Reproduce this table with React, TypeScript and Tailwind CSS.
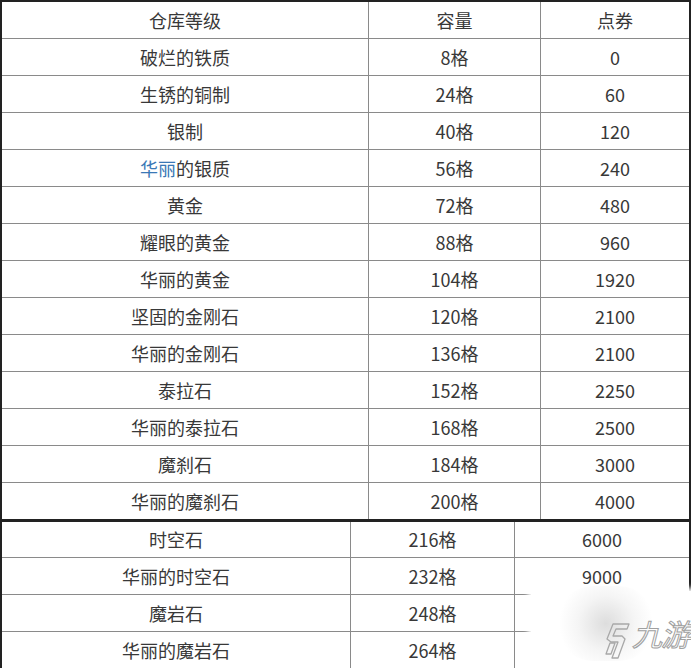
import React from 'react';

type Row = { name: string; cap: string; cost: string; blue?: string };

const upper: Row[] = [
  { name: '破烂的铁质', cap: '8格', cost: '0' },
  { name: '生锈的铜制', cap: '24格', cost: '60' },
  { name: '银制', cap: '40格', cost: '120' },
  { name: '的银质', cap: '56格', cost: '240', blue: '华丽' },
  { name: '黄金', cap: '72格', cost: '480' },
  { name: '耀眼的黄金', cap: '88格', cost: '960' },
  { name: '华丽的黄金', cap: '104格', cost: '1920' },
  { name: '坚固的金刚石', cap: '120格', cost: '2100' },
  { name: '华丽的金刚石', cap: '136格', cost: '2100' },
  { name: '泰拉石', cap: '152格', cost: '2250' },
  { name: '华丽的泰拉石', cap: '168格', cost: '2500' },
  { name: '魔刹石', cap: '184格', cost: '3000' },
  { name: '华丽的魔刹石', cap: '200格', cost: '4000' },
];

const lower: Row[] = [
  { name: '时空石', cap: '216格', cost: '6000' },
  { name: '华丽的时空石', cap: '232格', cost: '9000' },
  { name: '魔岩石', cap: '248格', cost: '' },
  { name: '华丽的魔岩石', cap: '264格', cost: '' },
];

const font = { fontFamily: '"Noto Sans CJK SC", "Noto Sans", sans-serif' };

// "九游" watermark in the bottom right corner
const Watermark = () => (
  <div className="absolute left-[531px] top-[591px] w-[170px] h-[90px] bg-white shadow-[0_0_5px_3px_white]">
    <div className="absolute left-[25px] top-[-5px] w-[100px] h-[75px] rounded-full bg-[radial-gradient(circle,_rgba(170,170,170,0.4)_0%,_rgba(200,200,200,0.18)_45%,_rgba(255,255,255,0)_75%)]" />
    <svg
      className="absolute left-[73px] top-[32px]"
      width="26"
      height="36"
      viewBox="0 0 26 36"
      fill="none"
      stroke="#a8a8a8"
      strokeWidth="1.3"
      strokeLinejoin="round"
    >
      <path d="M9 1 L25 1 L23 6 L12 6 L9 13 L18 13 L21 16 L14 35 L8 35 L14 19 L7 19 L3 16 Z" />
      <path d="M6 20 L11 20 L7 31 L2 31 Z" />
    </svg>
    <span
      className="absolute left-[101px] top-[24px] h-[36px] flex items-center text-[30px] leading-none italic text-transparent [-webkit-text-stroke:1px_#a0a0a0] tracking-[-1px] whitespace-nowrap"
      style={font}
    >
      九游
    </span>
  </div>
);

const Cell: React.FC<{ w: string; last?: boolean; children: React.ReactNode }> = ({ w, last, children }) => (
  <div className={`${w} flex items-center justify-center ${last ? '' : 'border-r border-[#8a8a8a]'}`}>{children}</div>
);

export default function App() {
  return (
    <div className="relative w-[691px] h-[668px] overflow-hidden bg-white text-[18px] text-[#383838]" style={font}>
      {/* upper table */}
      <div className="border-t-2 border-l-2 border-r-2 border-[#222]">
        <div className="flex h-[37px] border-b border-[#8a8a8a]">
          <Cell w="w-[367px]">仓库等级</Cell>
          <Cell w="w-[172px]">容量</Cell>
          <Cell w="w-[148px]" last>点券</Cell>
        </div>
        {upper.map((r, i) => (
          <div
            key={r.cap}
            className={`flex ${i === upper.length - 1 ? 'h-[39px] border-b-[3px] border-[#222]' : 'h-[37px] border-b border-[#8a8a8a]'}`}
          >
            <Cell w="w-[367px]">
              {r.blue && <span className="text-[#3a78b6]">{r.blue}</span>}
              {r.name}
            </Cell>
            <Cell w="w-[172px]">{r.cap}</Cell>
            <Cell w="w-[148px]" last>{r.cost}</Cell>
          </div>
        ))}
      </div>

      {/* lower table */}
      <div className="border-l-2 border-r-2 border-[#222]">
        {lower.map((r, i) => (
          <div key={r.cap} className={`flex ${i === 0 ? 'h-[36px]' : 'h-[37px]'} border-b border-[#8a8a8a]`}>
            <Cell w="w-[349px]">{r.name}</Cell>
            <Cell w="w-[164px]">{r.cap}</Cell>
            <Cell w="w-[174px]" last>{r.cost}</Cell>
          </div>
        ))}
      </div>

      <Watermark />
    </div>
  );
}
